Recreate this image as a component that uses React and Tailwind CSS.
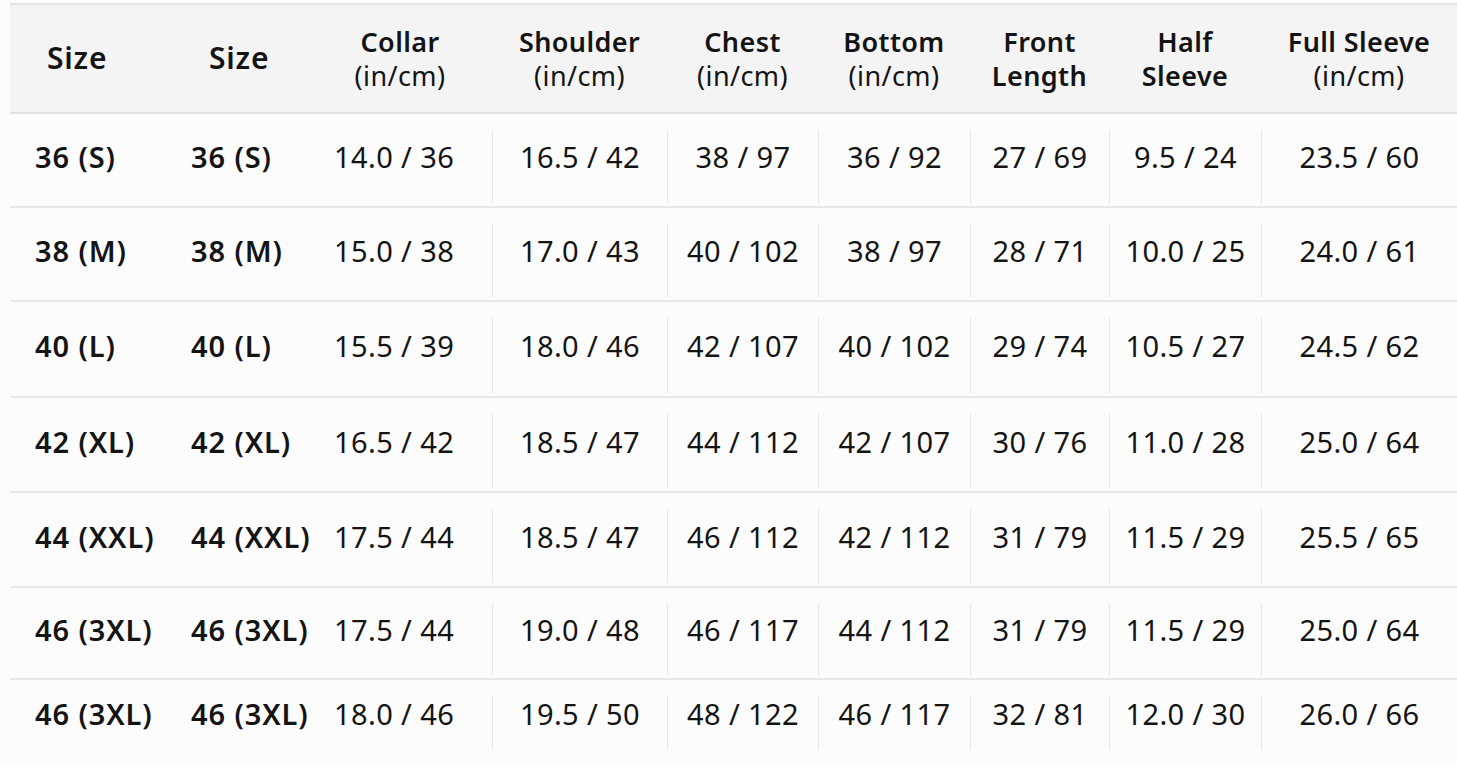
import React from 'react';

const rows = [
  ['36 (S)', '36 (S)', '14.0 / 36', '16.5 / 42', '38 / 97', '36 / 92', '27 / 69', '9.5 / 24', '23.5 / 60'],
  ['38 (M)', '38 (M)', '15.0 / 38', '17.0 / 43', '40 / 102', '38 / 97', '28 / 71', '10.0 / 25', '24.0 / 61'],
  ['40 (L)', '40 (L)', '15.5 / 39', '18.0 / 46', '42 / 107', '40 / 102', '29 / 74', '10.5 / 27', '24.5 / 62'],
  ['42 (XL)', '42 (XL)', '16.5 / 42', '18.5 / 47', '44 / 112', '42 / 107', '30 / 76', '11.0 / 28', '25.0 / 64'],
  ['44 (XXL)', '44 (XXL)', '17.5 / 44', '18.5 / 47', '46 / 112', '42 / 112', '31 / 79', '11.5 / 29', '25.5 / 65'],
  ['46 (3XL)', '46 (3XL)', '17.5 / 44', '19.0 / 48', '46 / 117', '44 / 112', '31 / 79', '11.5 / 29', '25.0 / 64'],
  ['46 (3XL)', '46 (3XL)', '18.0 / 46', '19.5 / 50', '48 / 122', '46 / 117', '32 / 81', '12.0 / 30', '26.0 / 66'],
];

const measures = [
  ['Shoulder', '(in/cm)'],
  ['Chest', '(in/cm)'],
  ['Bottom', '(in/cm)'],
  ['Front', 'Length', true],
  ['Half', 'Sleeve', true],
  ['Full Sleeve', '(in/cm)'],
];

const grid = 'grid grid-cols-[168px_144px_170px_175px_151px_152px_139px_152px_196px]';
const heights = ['h-[94px]', 'h-[94px]', 'h-[96px]', 'h-[95px]', 'h-[95px]', 'h-[92px]', 'h-[73px]'];

const HeadCell = ({ top, bottom, bold }) => (
  <div className="flex flex-col items-center justify-center leading-[34px] text-[27px] tracking-[0.4px]">
    <span className="font-semibold">{top}</span>
    <span className={bold ? 'font-semibold' : 'font-normal'}>{bottom}</span>
  </div>
);

export default function App() {
  return (
    <div
      className="w-[1457px] h-[765px] bg-[#fcfcfc] text-[#141414] overflow-hidden pt-[3px] pl-[10px]"
      style={{ fontFamily: '"Noto Sans", "Open Sans", sans-serif' }}
    >
      <div className={`${grid} h-[111px] bg-[#f4f4f4] border-t-2 border-b-2 border-[#e2e2e2]`}>
        <div className="flex items-center pl-[37px] text-[30px] font-semibold tracking-[0.8px] pb-[2px]">Size</div>
        <div className="flex items-center pl-[31px] text-[30px] font-semibold tracking-[0.8px] pb-[2px]">Size</div>
        <div className="pr-[14px] flex justify-center">
          <HeadCell top="Collar" bottom="(in/cm)" />
        </div>
        {measures.map(([t, b, bold], i) => (
          <HeadCell key={i} top={t} bottom={b} bold={bold} />
        ))}
      </div>

      {rows.map((row, r) => (
        <div
          key={r}
          className={`${grid} ${heights[r]} ${r < rows.length - 1 ? 'border-b-2 border-[#e8e8e8]' : ''}`}
        >
          <div className="flex items-center pl-[25px] text-[29px] font-semibold tracking-[0.9px] pb-[6px]">{row[0]}</div>
          <div className="flex items-center pl-[13px] text-[29px] font-semibold tracking-[0.9px] pb-[6px]">{row[1]}</div>
          <div className="flex items-center pl-[12px] text-[29px] tracking-[0.4px] pb-[6px]">{row[2]}</div>
          {row.slice(3).map((v, c) => (
            <div key={c} className="flex">
              <div className="w-px bg-[#e6e6e6] mt-[16px] mb-[3px]" />
              <div className="flex-1 flex items-center justify-center text-[29px] tracking-[0.4px] pb-[6px]">{v}</div>
            </div>
          ))}
        </div>
      ))}
    </div>
  );
}
